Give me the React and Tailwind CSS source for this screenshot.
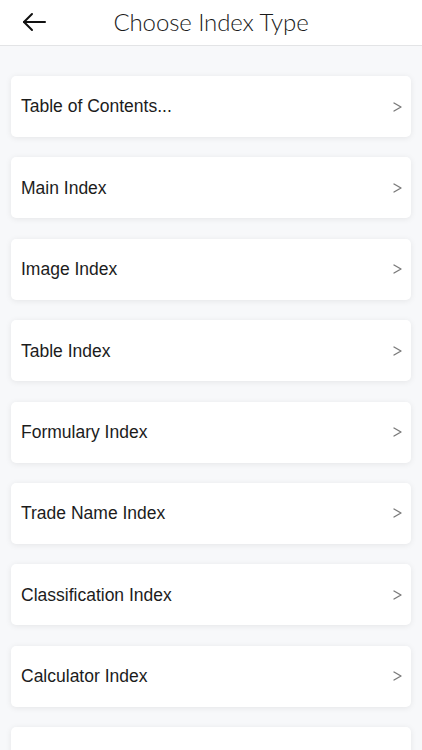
import React from "react";

const items = [
  "Table of Contents...",
  "Main Index",
  "Image Index",
  "Table Index",
  "Formulary Index",
  "Trade Name Index",
  "Classification Index",
  "Calculator Index",
  "",
];

function Chevron() {
  return (
    <svg width="9" height="10" viewBox="0 0 9 10" fill="none" stroke="#7a7a7a" strokeWidth="1.4" strokeLinecap="round" strokeLinejoin="round">
      <path d="M1 1L8 5L1 9" />
    </svg>
  );
}

export default function App() {
  return (
    <div className="w-[422px] h-[750px] overflow-hidden bg-[#f7f8fa]" style={{ fontFamily: "'Liberation Sans', Arial, sans-serif" }}>
      <div className="relative h-[46px] bg-white border-b border-[#e3e4e6] flex items-center justify-center">
        <button className="absolute left-[22px] top-[12px] w-[24px] h-[20px] flex items-center justify-center">
          <svg width="24" height="20" viewBox="0 0 24 20" fill="none" stroke="#111" strokeWidth="2" strokeLinecap="round" strokeLinejoin="round">
            <path d="M23 10H2" />
            <path d="M10 2L2 10L10 18" />
          </svg>
        </button>
        <h1 className="text-[24px] font-light text-[#1a1a1a] tracking-[-0.1px] -mt-[1px]" style={{ fontFamily: "Lato, 'Liberation Sans', sans-serif" }}>
          Choose Index Type
        </h1>
      </div>
      <div className="flex flex-col gap-[20.4px] pt-[30px] px-[11px]">
        {items.map((t, i) => (
          <div key={i} className="h-[61px] shrink-0 bg-white rounded-[5px] shadow-[0_1px_6px_rgba(0,0,0,0.08)] flex items-center justify-between pl-[10px] pr-[9px]">
            <span className="text-[17.5px] text-[#1c1c1c]">{t}</span>
            {t && (
              <span className="flex items-center">
                <Chevron />
              </span>
            )}
          </div>
        ))}
      </div>
    </div>
  );
}
